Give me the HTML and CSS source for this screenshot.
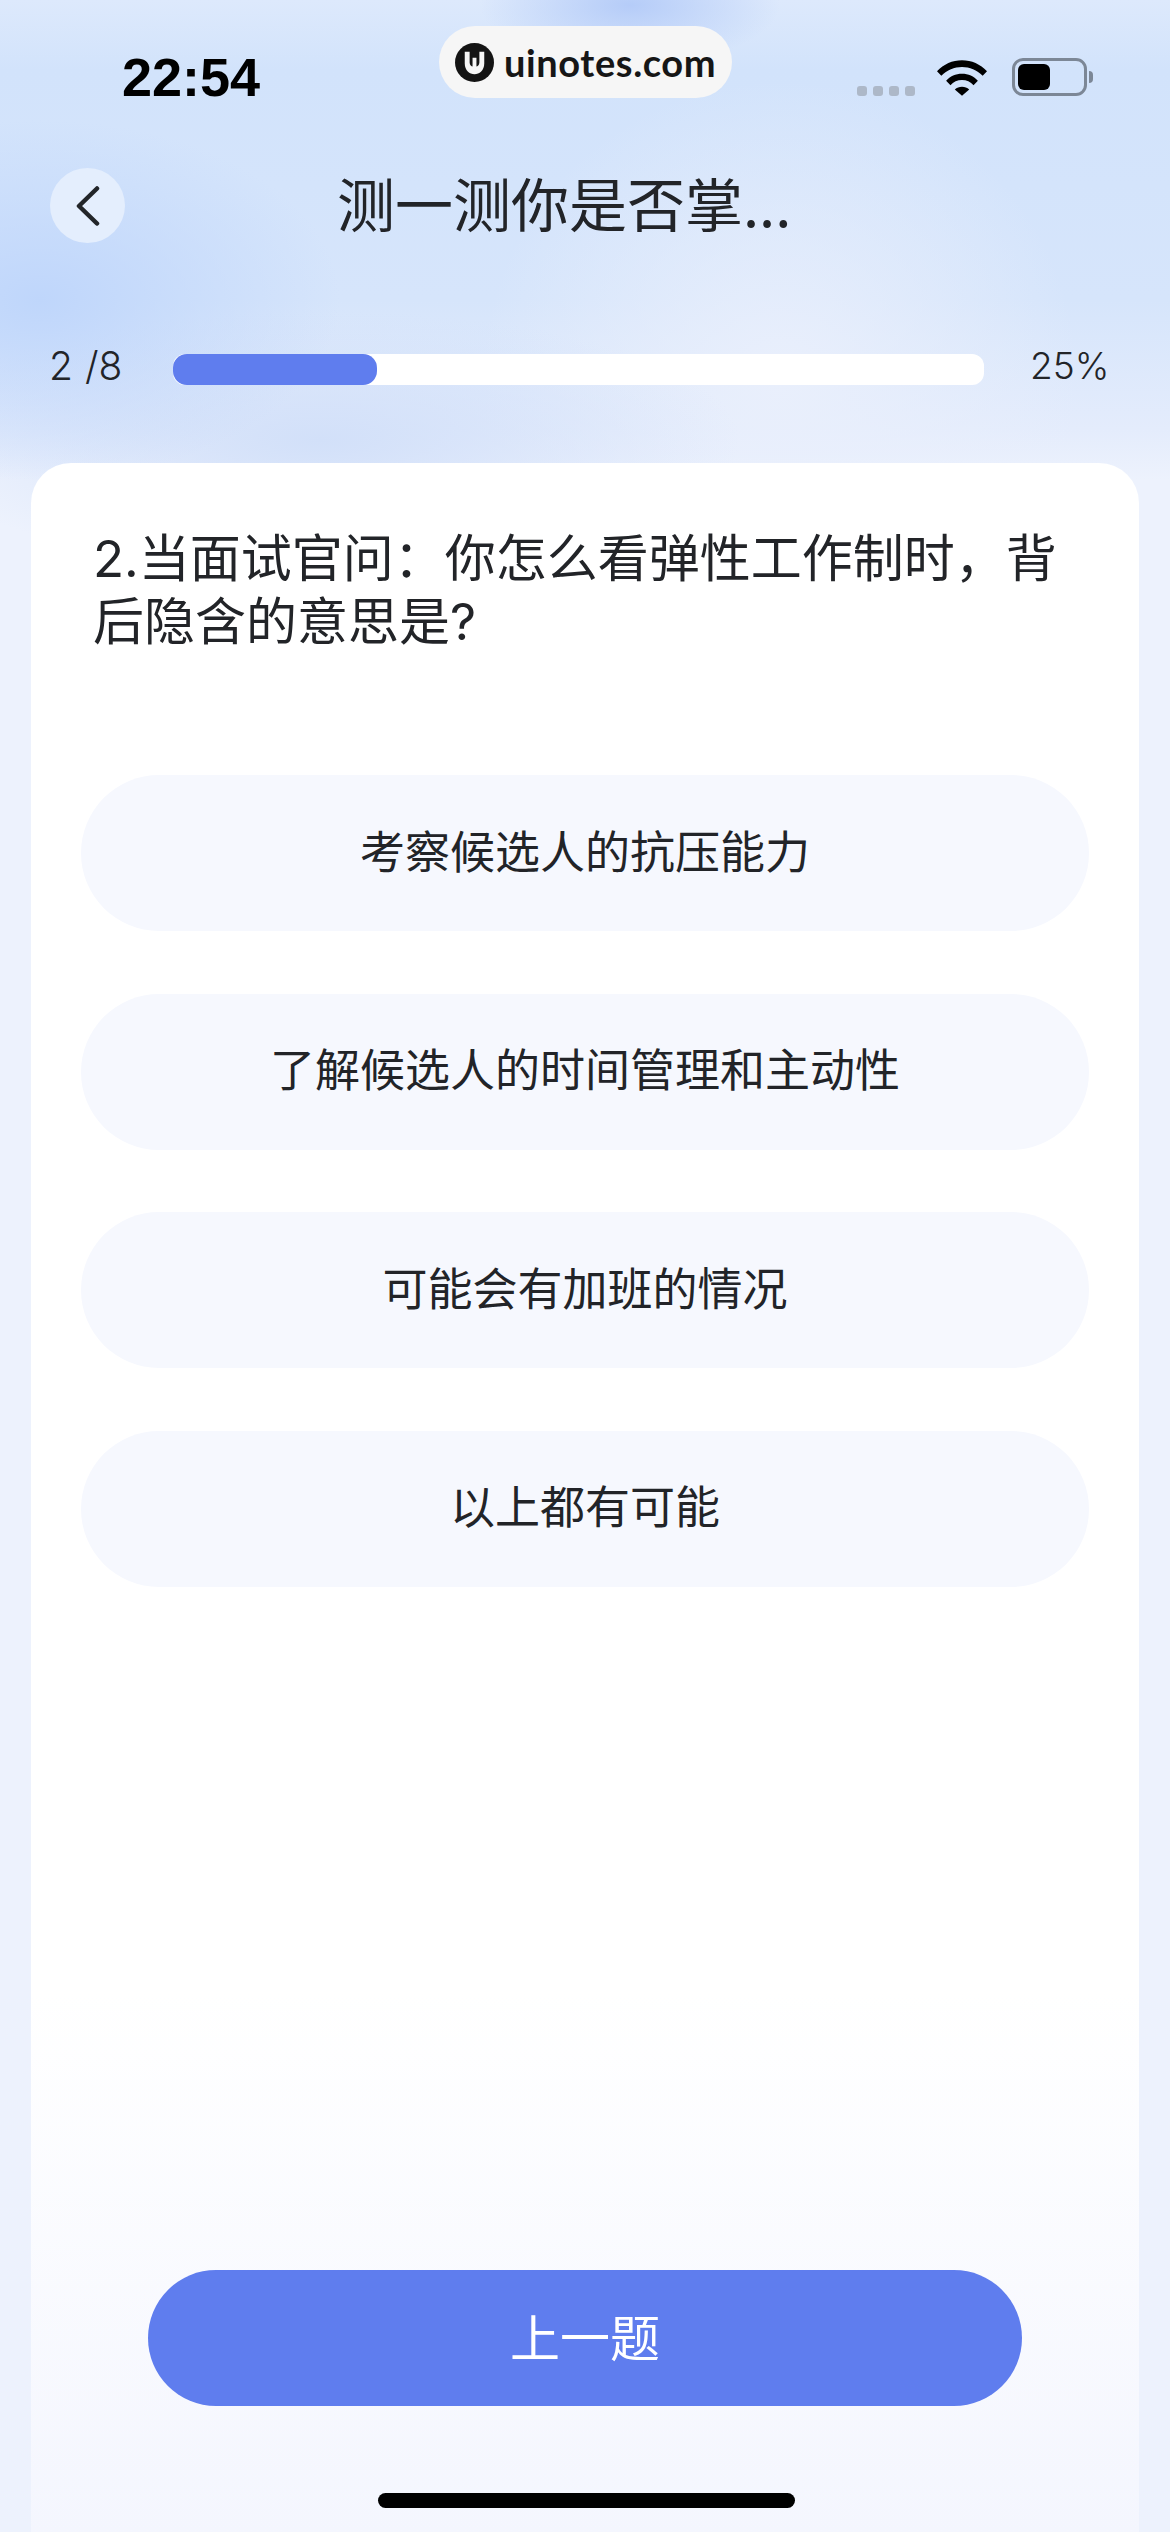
FILE: index.html
```html
<!DOCTYPE html>
<html lang="zh-CN">
<head>
    <meta charset="UTF-8">
    <meta name="viewport" content="width=device-width, initial-scale=1.0">
    <title>测一测你是否掌握</title>
    <link rel="stylesheet" href="styles.css">
</head>
<body>
    <div class="status-bar">
        <span class="time">22:54</span>
        <div class="watermark">
            <svg class="wm-logo" viewBox="0 0 40 40">
                <circle cx="20" cy="20" r="20" fill="#141414"/>
                <path d="M10 9h5v11c0 3 2 4 3 4v-9h4v9c1 0 3-1 3-4V9h5v12c0 7-5 11-10 11S10 28 10 21z" fill="#f6f6f6"/>
            </svg>
            <span class="wm-text">uinotes.com</span>
        </div>
        <div class="status-icons">
            <div class="signal"><i></i><i></i><i></i><i></i></div>
            <svg class="wifi" viewBox="0 0 52 38">
                <path d="M0 12.5C7 5 16 1 26 1s19 4 26 11.5l-4.5 4.8C41.500 11 34 8 26 8S10.500 11 4.500 17.300z"/>
                <path d="M9.500 22.300C13.500 17.500 19.500 15 26 15s12.500 2.500 16.500 7.300L38 27c-3-3.500-7.300-5.300-12-5.300S17 23.500 14 27z"/>
                <path d="M18.500 31.500c2-2 4.700-3 7.500-3s5.500 1 7.500 3L26 38z"/>
            </svg>
            <div class="battery"><div class="battery-level"></div></div>
            <div class="battery-cap"></div>
        </div>
    </div>

    <div class="nav">
        <button class="back">
            <svg viewBox="0 0 24 40" class="back-icon">
                <path d="M21 2.500 3 20l18 17.500" fill="none" stroke="#222529" stroke-width="4.500" stroke-linecap="round" stroke-linejoin="round"/>
            </svg>
        </button>
        <h1 class="title">测一测你是否掌...</h1>
    </div>

    <div class="progress-row">
        <span class="count">2 /8</span>
        <div class="progress"><div class="progress-fill"></div></div>
        <span class="percent">25%</span>
    </div>

    <main class="card">
        <p class="question">2.当面试官问：你怎么看弹性工作制时，背后隐含的意思是?</p>
        <div class="options">
            <div class="option">考察候选人的抗压能力</div>
            <div class="option">了解候选人的时间管理和主动性</div>
            <div class="option">可能会有加班的情况</div>
            <div class="option">以上都有可能</div>
        </div>
        <button class="prev">上一题</button>
        <div class="home-bar"></div>
    </main>
</body>
</html>
```

FILE: styles.css
```css
* {
    box-sizing: border-box;
}

html, body {
    height: 2532px;
}

body {
    margin: 0;
    display: flex;
    flex-direction: column;
    overflow: hidden;
    font-family: Inter, "Noto Sans CJK SC", sans-serif;
    color: #222428;
    background-color: #edf2fd;
    background-image:
        radial-gradient(ellipse 150px 60px at 630px 5px, #b5ccf8 0%, rgba(181, 204, 248, 0) 100%),
        radial-gradient(ellipse 300px 180px at 40px 300px, #bfd6fb 0%, rgba(191, 214, 251, 0) 100%),
        radial-gradient(ellipse 420px 130px at 320px 440px, #d2e0f9 0%, rgba(210, 224, 249, 0) 100%),
        radial-gradient(ellipse 300px 300px at 780px 380px, #e9effc 0%, rgba(233, 239, 252, 0) 100%),
        linear-gradient(180deg, #dde9fc 0%, #d2e3fb 70px, #d6e5fb 300px, #e4ecfc 430px, #edf2fd 480px);
}

.status-bar {
    height: 104px;
    padding: 26px 77px 0 122px;
    display: flex;
    justify-content: space-between;
    align-items: flex-start;
    flex-shrink: 0;
}

.time {
    margin-top: 22px;
    width: 140px;
    font-family: "Liberation Sans", sans-serif;
    font-size: 54px;
    line-height: 58px;
    font-weight: 700;
    color: #000;
}

.watermark {
    width: 293px;
    height: 72px;
    margin-left: 52px;
    padding-left: 16px;
    display: flex;
    align-items: center;
    gap: 10px;
    background: #f6f6f6;
    border-radius: 36px;
}

.wm-logo {
    width: 39px;
    height: 39px;
    flex-shrink: 0;
}

.wm-text {
    font-family: Lato, sans-serif;
    font-size: 38px;
    line-height: 40px;
    font-weight: 700;
    color: #161616;
    letter-spacing: 0.6px;
}

.status-icons {
    margin-top: 32px;
    display: flex;
    align-items: flex-end;
}

.signal {
    display: flex;
    gap: 6px;
    margin-right: 22px;
}

.signal i {
    width: 10px;
    height: 10px;
    border-radius: 3px;
    background: #adb8c8;
}

.wifi {
    width: 50px;
    height: 37px;
    fill: #000;
    margin-right: 25px;
}

.battery {
    width: 75px;
    height: 38px;
    padding: 3px;
    border: 3px solid #7c8796;
    border-radius: 11px;
}

.battery-level {
    width: 32px;
    height: 100%;
    background: #000;
    border-radius: 6px;
}

.battery-cap {
    width: 4px;
    height: 12px;
    margin: 0 0 13px 2px;
    background: #7c8796;
    border-radius: 0 4px 4px 0;
}

.nav {
    height: 75px;
    margin-top: 64px;
    padding: 0 50px;
    display: flex;
    align-items: center;
    flex-shrink: 0;
}

.back {
    width: 75px;
    height: 75px;
    padding: 0;
    border: 0;
    border-radius: 50%;
    background: #e4eefd;
    display: flex;
    align-items: center;
    justify-content: center;
    flex-shrink: 0;
}

.back-icon {
    width: 24px;
    height: 40px;
}

.title {
    margin: 0 0 6px 212px;
    font-family: "Noto Sans CJK SC", sans-serif;
    font-size: 58px;
    line-height: 75px;
    font-weight: 400;
    white-space: nowrap;
}

.progress-row {
    height: 32px;
    margin-top: 110px;
    padding: 0 60px 0 49px;
    display: flex;
    align-items: center;
    flex-shrink: 0;
}

.count, .percent {
    font-size: 37px;
    line-height: 40px;
    font-weight: 300;
    position: relative;
    top: -3px;
}

.count {
    width: 124px;
    font-size: 39px;
    word-spacing: 1px;
    flex-shrink: 0;
}

.percent {
    margin-left: 46px;
}

.progress {
    width: 811px;
    height: 31px;
    background: #fff;
    border-radius: 12px;
    flex-shrink: 0;
}

.progress-fill {
    width: 204px;
    height: 100%;
    background: #5f7dee;
    border-radius: 14px;
}

.card {
    flex: 1;
    margin: 78px 31px 0;
    padding: 64px 50px 24px;
    display: flex;
    flex-direction: column;
    border-radius: 40px 40px 0 0;
    background: linear-gradient(180deg, #fff 0%, #fff 74%, #f4f6fe 100%);
}

.question {
    margin: 0 0 0 12px;
    font-size: 51px;
    line-height: 63px;
    font-weight: 400;
    min-height: 126px;
}

.options {
    margin-top: 122px;
    display: flex;
    flex-direction: column;
    gap: 62.5px;
}

.option {
    height: 156px;
    padding-bottom: 8px;
    border-radius: 78px;
    background: #f6f8fe;
    display: flex;
    align-items: center;
    justify-content: center;
    font-family: "Noto Sans CJK SC", sans-serif;
    font-size: 45px;
    font-weight: 400;
}

.prev {
    width: 874px;
    height: 136px;
    margin: auto 0 0 67px;
    padding-bottom: 8px;
    border: 0;
    border-radius: 68px;
    background: #5f7dee;
    color: #fff;
    font-family: "Noto Sans CJK SC", sans-serif;
    font-size: 50px;
    font-weight: 400;
}

.home-bar {
    width: 417px;
    height: 15px;
    margin: 87px 0 0 297px;
    background: #000;
    border-radius: 8px;
}
```
